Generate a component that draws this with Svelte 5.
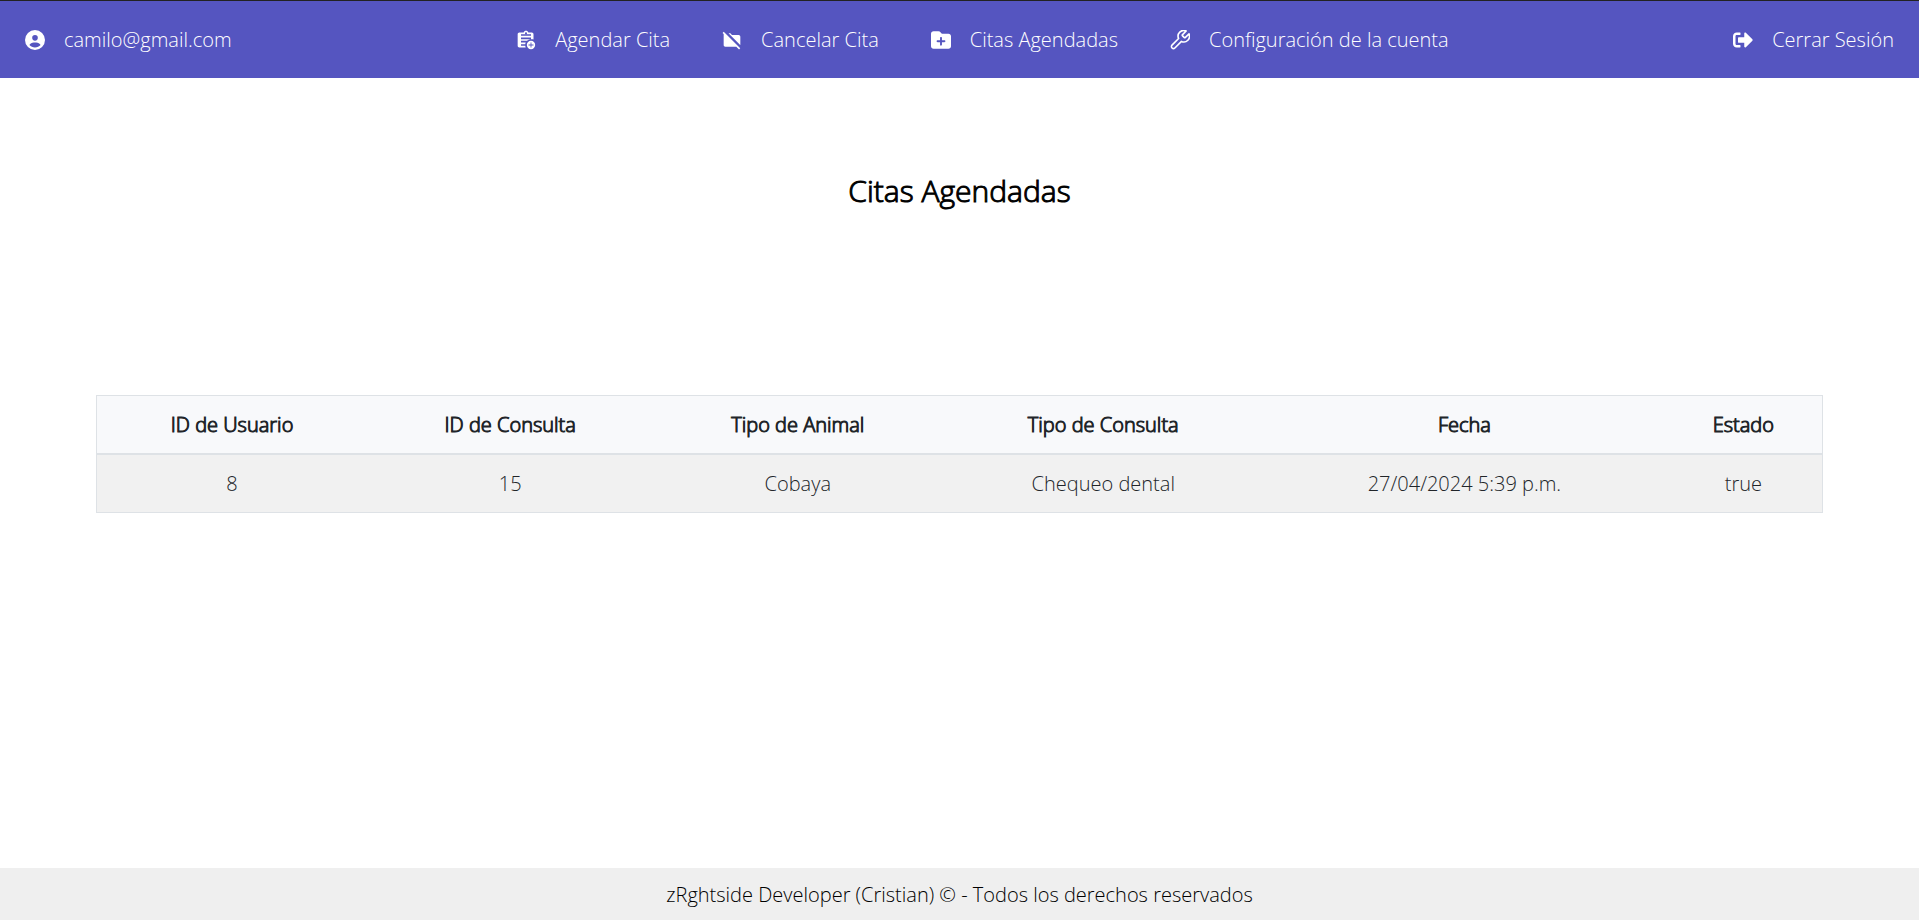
<script lang="ts">
  interface NavLink {
    label: string;
    href: string;
    viewBox: string;
    path: string;
    outline?: boolean;
  }

  interface Cita {
    usuario: number;
    consulta: number;
    animal: string;
    tipo: string;
    fecha: string;
    estado: boolean;
  }

  const perfil: NavLink = {
    label: 'camilo@gmail.com',
    href: '#perfil',
    viewBox: '0 0 512 512',
    path: 'M399 384.2C376.9 345.8 335.4 320 288 320H224c-47.4 0-88.9 25.8-111 64.2c35.2 39.2 86.2 63.8 143 63.8s107.8-24.7 143-63.8zM0 256a256 256 0 1 1 512 0A256 256 0 1 1 0 256zm256 16a72 72 0 1 0 0-144 72 72 0 1 0 0 144z',
  };

  const menu: NavLink[] = [
    {
      label: 'Agendar Cita',
      href: '#agendar',
      viewBox: '0 0 24 24',
      path: 'M19 3h-4.180C14.400 1.840 13.300 1 12 1S9.600 1.840 9.180 3H4c-1.100 0-2 .9-2 2v14c0 1.100.9 2 2 2h7.600a7 7 0 0 1-.5-2H6v-2h5.100c.1-.7.300-1.400.6-2H6v-2h7.100A7 7 0 0 1 18 11H6V9h12v2h1c1 0 1.500.2 2 .5V5c0-1.100-.9-2-2-2zM12 2.750a1.250 1.250 0 1 1 0 2.500 1.250 1.250 0 0 1 0-2.500zM6 7V5h12v2zM18 13a5 5 0 1 0 0 10 5 5 0 0 0 0-10zm3 5.500h-2.500V21h-1v-2.500H15v-1h2.500V15h1v2.500H21z',
    },
    {
      label: 'Cancelar Cita',
      href: '#cancelar',
      viewBox: '0 0 24 24',
      path: 'M20 6h-8l-2-2H7.830l14 14c.1-.300.170-.6.170-1V8c0-1.100-.9-2-2-2zM2.100 2.100.690 3.510 2 4.830V18c0 1.100.9 2 2 2h13.170l3.310 3.310 1.410-1.410L2.100 2.100z',
    },
    {
      label: 'Citas Agendadas',
      href: '#citas',
      viewBox: '0 0 512 512',
      path: 'M512 416c0 35.300-28.700 64-64 64H64c-35.300 0-64-28.700-64-64V96C0 60.700 28.700 32 64 32H192c20.100 0 39.100 9.500 51.200 25.600l19.200 25.600c6 8.100 15.500 12.800 25.600 12.800H448c35.300 0 64 28.700 64 64V416zM232 376c0 13.300 10.700 24 24 24s24-10.700 24-24V312h64c13.300 0 24-10.700 24-24s-10.700-24-24-24H280V200c0-13.300-10.700-24-24-24s-24 10.700-24 24v64H168c-13.300 0-24 10.700-24 24s10.700 24 24 24h64v64z',
    },
    {
      label: 'Configuración de la cuenta',
      href: '#cuenta',
      viewBox: '1.5 1.5 21 21',
      path: 'M14.7 6.3a1 1 0 0 0 0 1.4l1.6 1.6a1 1 0 0 0 1.4 0l3.770-3.770a6 6 0 0 1-7.940 7.940l-6.910 6.910a2.120 2.120 0 0 1-3-3l6.910-6.910a6 6 0 0 1 7.940-7.940l-3.760 3.760z',
      outline: true,
    },
  ];

  const salir: NavLink = {
    label: 'Cerrar Sesión',
    href: '#salir',
    viewBox: '0 0 512 512',
    path: 'M497 273L329 441c-15 15-41 4.500-41-17v-96H152c-13.300 0-24-10.700-24-24v-96c0-13.300 10.700-24 24-24h136V88c0-21.400 25.900-32 41-17l168 168c9.300 9.400 9.300 24.600 0 34zM192 436v-40c0-6.600-5.400-12-12-12H96c-17.700 0-32-14.300-32-32V160c0-17.700 14.300-32 32-32h84c6.600 0 12-5.400 12-12V76c0-6.600-5.400-12-12-12H96c-53 0-96 43-96 96v192c0 53 43 96 96 96h84c6.600 0 12-5.400 12-12z',
  };

  const columnas = [
    'ID de Usuario',
    'ID de Consulta',
    'Tipo de Animal',
    'Tipo de Consulta',
    'Fecha',
    'Estado',
  ];

  let citas = $state<Cita[]>([
    {
      usuario: 8,
      consulta: 15,
      animal: 'Cobaya',
      tipo: 'Chequeo dental',
      fecha: '27/04/2024 5:39 p.m.',
      estado: true,
    },
  ]);
</script>

{#snippet navLink(link: NavLink)}
  <a class="nav-link" href={link.href}>
    <svg class="icon" class:outline={link.outline} viewBox={link.viewBox} aria-hidden="true">
      <path d={link.path} fill-rule="evenodd" />
    </svg>
    <span>{link.label}</span>
  </a>
{/snippet}

<div class="page">
  <nav class="navbar">
    {@render navLink(perfil)}
    <div class="menu">
      {#each menu as link (link.href)}
        {@render navLink(link)}
      {/each}
    </div>
    {@render navLink(salir)}
  </nav>

  <main>
    <h1>Citas Agendadas</h1>

    <table>
      <thead>
        <tr>
          {#each columnas as columna (columna)}
            <th scope="col">{columna}</th>
          {/each}
        </tr>
      </thead>
      <tbody>
        {#each citas as cita (cita.consulta)}
          <tr>
            <td>{cita.usuario}</td>
            <td>{cita.consulta}</td>
            <td>{cita.animal}</td>
            <td>{cita.tipo}</td>
            <td>{cita.fecha}</td>
            <td>{cita.estado}</td>
          </tr>
        {/each}
      </tbody>
    </table>
  </main>

  <footer>zRghtside Developer (Cristian) © - Todos los derechos reservados</footer>
</div>

<style>
  :global(body) { margin: 0; background: #fff; }
  .page {
    display: flex;
    flex-direction: column;
    min-height: 100vh;
    font-family: 'Open Sans', sans-serif;
    font-size: 20px;
    font-weight: 300;
    line-height: 27px;
    color: #000;
  }
  .navbar {
    display: flex;
    justify-content: space-between;
    align-items: center;
    box-sizing: border-box;
    height: 78px;
    border-top: 1px solid #222;
    background: #5555c0;
  }
  .menu { display: flex; gap: 2px; }
  .nav-link {
    display: flex;
    align-items: center;
    gap: 19px;
    padding: 0 25px;
    color: #fff;
    text-decoration: none;
    white-space: nowrap;
  }
  .icon { width: 20px; height: 20px; fill: currentColor; }
  .icon.outline {
    fill: none;
    stroke: currentColor;
    stroke-width: 1.7;
    stroke-linejoin: round;
  }
  main {
    flex: 1;
    padding: 92px 5% 40px;
  }
  /* the light face thickened by a stroke, lighter than a real bold */
  h1, th {
    font-weight: 300;
    -webkit-text-stroke: 1px currentColor;
  }
  h1 {
    margin: 0 0 184px;
    font-size: 30px;
    line-height: 41px;
    text-align: center;
  }
  table {
    width: 100%;
    border: 1px solid #dee2e6;
    border-collapse: collapse;
    color: #212529;
    text-align: center;
  }
  th, td { padding: 15px 12px; }
  th {
    border-bottom: 2px solid #dee2e6;
    background: #f8f9fb;
  }
  tbody tr:nth-child(odd) { background: #f1f1f1; }
  footer {
    padding: 13px 12px 12px;
    background: #efefef;
    text-align: center;
  }
</style>
